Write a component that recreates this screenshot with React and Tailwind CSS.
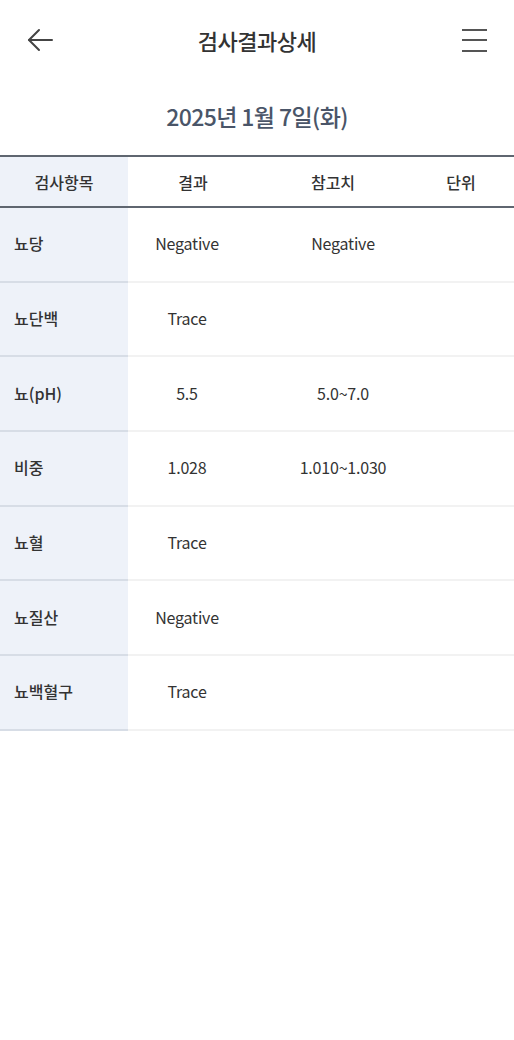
const rows = [
  { name: '뇨당', result: 'Negative', ref: 'Negative' },
  { name: '뇨단백', result: 'Trace', ref: '' },
  { name: '뇨(pH)', result: '5.5', ref: '5.0~7.0' },
  { name: '비중', result: '1.028', ref: '1.010~1.030' },
  { name: '뇨혈', result: 'Trace', ref: '' },
  { name: '뇨질산', result: 'Negative', ref: '' },
  { name: '뇨백혈구', result: 'Trace', ref: '' },
];

const App = () => {
  return (
    <div className="min-h-[1040px] w-[514px] bg-white text-[#333] font-['Noto_Sans_CJK_KR',sans-serif]">
      <header className="flex h-[80px] items-center justify-between px-[26px]">
        <svg width="28" height="28" viewBox="0 0 28 28" fill="none" stroke="#444" strokeWidth="2" strokeLinecap="round" strokeLinejoin="round">
          <path d="M26 14H3" />
          <path d="M13 4L3 14l10 10" />
        </svg>
        <h1 className="text-[22px] font-medium tracking-[-0.5px] text-[#333]">검사결과상세</h1>
        <svg width="28" height="28" viewBox="0 0 28 28" fill="none" stroke="#555" strokeWidth="2">
          <path d="M2 4h25" />
          <path d="M2 14h25" />
          <path d="M2 25h25" />
        </svg>
      </header>

      <div className="flex h-[75px] items-center justify-center pb-[2px]">
        <p className="text-[23px] font-medium tracking-[-0.6px] text-[#4a5568]">2025년 1월 7일(화)</p>
      </div>

      <div className="flex h-[53px] border-y-2 border-[#5f6670] text-[16px] font-medium">
        <div className="flex w-[128px] items-center justify-center bg-[#eef2f9]">검사항목</div>
        <div className="flex w-[130px] items-center justify-center">결과</div>
        <div className="flex w-[150px] items-center justify-center">참고치</div>
        <div className="flex flex-1 items-center justify-center">단위</div>
      </div>

      {rows.map(row => (
        <div key={row.name} className="flex h-[74.7px] text-[16px]">
          <div className="flex w-[128px] items-center border-b-2 border-[#d7dde6] bg-[#eef2f9] pl-[14px] pb-[2px] font-medium">
            {row.name}
          </div>
          <div className="flex flex-1 border-b-2 border-[#f2f2f2]">
            <div className="flex w-[118px] items-center justify-center pb-[2px] tracking-[-0.2px]">{row.result}</div>
            <div className="flex w-[194px] items-center justify-center pb-[2px] tracking-[-0.2px]">{row.ref}</div>
            <div className="flex-1" />
          </div>
        </div>
      ))}
    </div>
  );
};

export default App;
